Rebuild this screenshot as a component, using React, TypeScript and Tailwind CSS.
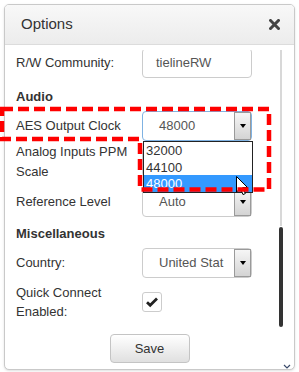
function Arrow() {
    return (
        <div className="h-full w-[17px] border border-[#9a9a9a] bg-gradient-to-b from-[#f6f6f6] to-[#d4d4d4] flex items-center justify-center">
            <div className="w-0 h-0 border-x-[3.5px] border-x-transparent border-t-[4px] border-t-black" />
        </div>
    );
}

function Select({ value, focused = false }: { value: string; focused?: boolean }) {
    return (
        <div className={`h-[30px] w-[110px] rounded-[4px] border bg-white flex items-center ${focused ? 'border-[#7fb2e2]' : 'border-[#cccccc]'}`}>
            <span className="flex-1 pl-[16px] text-[#555] whitespace-nowrap overflow-hidden">{value}</span>
            <Arrow />
        </div>
    );
}

function Row({ label, children, className = '' }: { label: React.ReactNode; children: React.ReactNode; className?: string }) {
    return (
        <div className={`flex items-center ${className}`}>
            <div className="w-[126px] text-[#333] leading-[20px]">{label}</div>
            {children}
        </div>
    );
}

export default function App() {
    return (
        <div className="relative w-[299px] h-[372px] bg-white font-['Liberation_Sans',Arial,sans-serif] text-[13px]">
            <div className="absolute left-[4px] top-[4px] w-[291px] h-[366px] border border-[#c9c9c9] rounded-[5px] shadow-sm flex flex-col overflow-hidden bg-white">
                <div className="h-[40px] shrink-0 border-b border-[#dcdcdc] bg-gradient-to-b from-[#f8f8f8] to-[#ececec] flex items-center justify-between pl-[16px] pr-[14px]">
                    <span className="text-[15px] text-[#333]">Options</span>
                    <svg width="11" height="11" viewBox="0 0 11 11">
                        <path d="M1.5 1.5 L9.5 9.5 M9.5 1.5 L1.5 9.5" stroke="#444" strokeWidth="3" strokeLinecap="square" />
                    </svg>
                </div>

                <div className="relative mt-[5px] h-[277px] shrink-0 overflow-hidden">
                    <div className="-mt-[2px] pl-[11px]">
                        <Row label="R/W Community:" className="h-[30px]">
                            <div className="h-[30px] w-[110px] rounded-[4px] border border-[#cccccc] bg-white flex items-center pl-[13px] text-[#555]">
                                tielineRW
                            </div>
                        </Row>

                        <div className="mt-[9px] h-[20px] leading-[20px] font-bold text-[#333]">Audio</div>

                        <Row label="AES Output Clock" className="mt-[4px] h-[30px]">
                            <Select value="48000" focused />
                        </Row>

                        <Row label={<>Analog Inputs PPM<br />Scale</>} className="mt-[1px] h-[40px]">
                            <Select value="" />
                        </Row>

                        <Row label="Reference Level" className="mt-[5px] h-[30px]">
                            <Select value="Auto" />
                        </Row>

                        <div className="mt-[7px] h-[20px] leading-[20px] font-bold text-[#333]">Miscellaneous</div>

                        <Row label="Country:" className="mt-[4px] h-[30px]">
                            <Select value="United Stat" />
                        </Row>

                        <div className="mt-[4px] h-[40px] flex items-center">
                            <div className="w-[126px] text-[#333] leading-[19px]">Quick Connect<br />Enabled:</div>
                            <div className="w-[20px] h-[20px] rounded-[3px] border border-[#cccccc] bg-white flex items-center justify-center">
                                <svg width="14" height="14" viewBox="0 0 14 14">
                                    <path d="M2 7.2 L5.2 10.2 L12 3.6" fill="none" stroke="#222" strokeWidth="2.8" />
                                </svg>
                            </div>
                        </div>
                    </div>

                    {/* scrollbar */}
                    <div className="absolute left-[275px] top-0 w-[2px] h-[176px] bg-[#d8d8d8]" />
                    <div className="absolute left-[274px] top-[177px] w-[4px] h-[100px] rounded-full bg-[#333]" />
                </div>

                <div className="flex-1 flex justify-center pt-[7px]">
                    <button className="w-[80px] h-[29px] rounded-[4px] border border-[#c4c4c4] bg-gradient-to-b from-white to-[#e0e0e0] text-[#333] text-[13px]">
                        Save
                    </button>
                </div>

                <svg className="absolute left-[278px] top-[359px]" width="8" height="5" viewBox="0 0 8 5">
                    <path d="M1 1 L4 4 L7 1" fill="none" stroke="#3a4a6a" strokeWidth="1.2" />
                </svg>
            </div>

            {/* open dropdown list */}
            <div className="absolute left-[143px] top-[141px] w-[110px] h-[52px] border border-[#222] bg-white text-[13px] leading-[17px]">
                <div className="h-[17px] pl-[2px] text-[#333]">32000</div>
                <div className="h-[16px] pl-[2px] text-[#333]">44100</div>
                <div className="h-[17px] pl-[2px] bg-[#3399ff] text-white">48000</div>
            </div>

            {/* mouse cursor */}
            <svg className="absolute left-[236px] top-[176px]" width="13" height="20" viewBox="0 0 13 20">
                <path d="M0.5 0.5 L0.5 16 L4.3 12.4 L7 18.6 L9.3 17.6 L6.7 11.6 L11.6 11.6 Z" fill="white" stroke="black" strokeWidth="1" />
            </svg>

            {/* annotation */}
            <svg className="absolute left-0 top-0 pointer-events-none" width="299" height="372">
                <path
                    d="M2 109 L269 109 L269 189.5 L140 189.5 L140 139 L2 139 Z"
                    fill="none"
                    stroke="#ff0000"
                    strokeWidth="4.5"
                    strokeDasharray="11 5"
                    strokeLinejoin="miter"
                />
            </svg>
        </div>
    );
}
